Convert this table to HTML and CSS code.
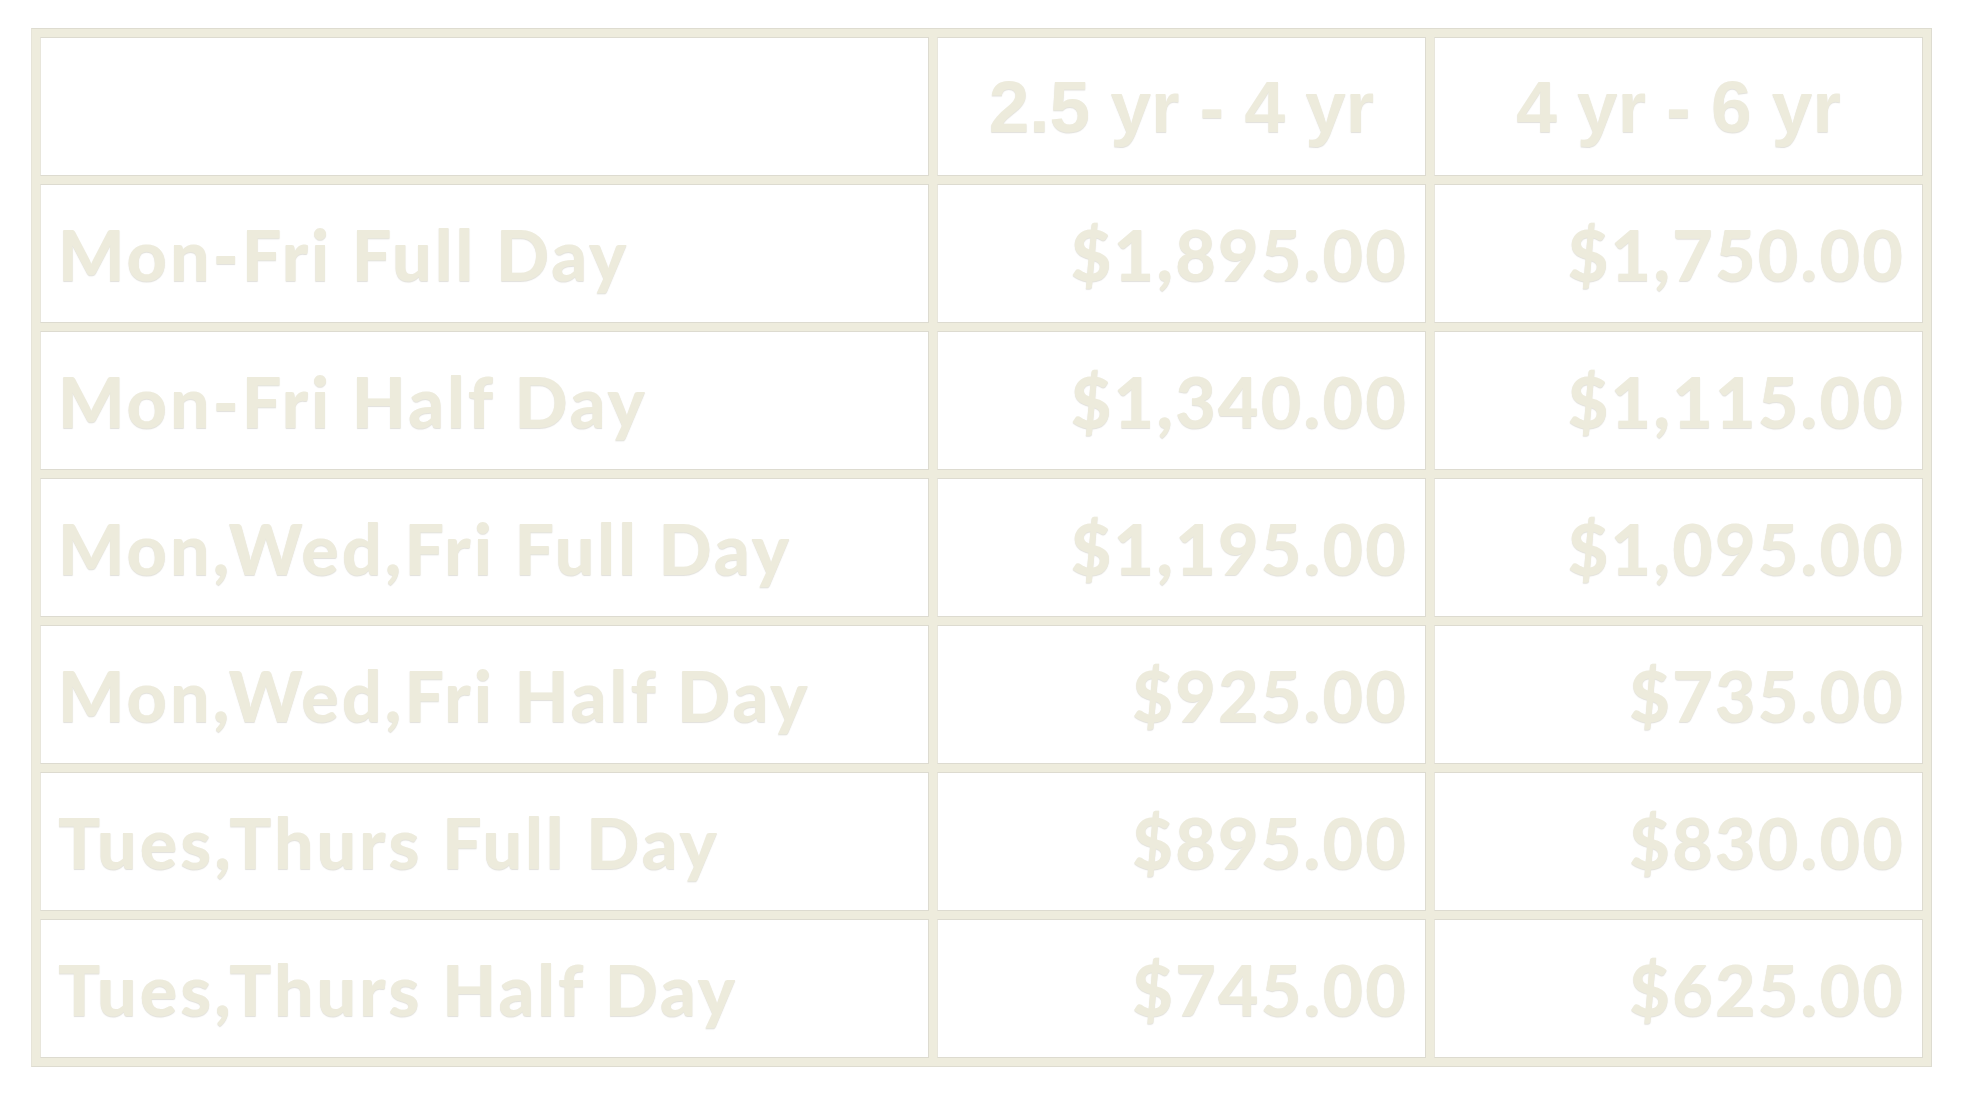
FILE: index.html
```html
<!DOCTYPE html>
<html lang="en">
<head>
<meta charset="utf-8">
<title>Tuition Rates</title>
<link rel="stylesheet" href="styles.css">
</head>
<body>
<div class="wrap">
  <table class="rates">
    <colgroup>
      <col class="c-label">
      <col class="c-price">
      <col class="c-price">
    </colgroup>
    <thead>
      <tr>
        <th class="blank"></th>
        <th class="age">2.5 yr - 4 yr</th>
        <th class="age">4 yr - 6 yr</th>
      </tr>
    </thead>
    <tbody>
      <tr><td class="label">Mon-Fri Full Day</td><td class="price">$1,895.00</td><td class="price">$1,750.00</td></tr>
      <tr><td class="label">Mon-Fri Half Day</td><td class="price">$1,340.00</td><td class="price">$1,115.00</td></tr>
      <tr><td class="label">Mon,Wed,Fri Full Day</td><td class="price">$1,195.00</td><td class="price">$1,095.00</td></tr>
      <tr><td class="label">Mon,Wed,Fri Half Day</td><td class="price">$925.00</td><td class="price">$735.00</td></tr>
      <tr><td class="label">Tues,Thurs Full Day</td><td class="price">$895.00</td><td class="price">$830.00</td></tr>
      <tr><td class="label">Tues,Thurs Half Day</td><td class="price">$745.00</td><td class="price">$625.00</td></tr>
    </tbody>
  </table>
</div>
</body>
</html>
```
FILE: styles.css
```css
html, body {
  margin: 0;
  padding: 0;
  background: #ffffff;
}

.wrap {
  padding: 28px 31px;
}

.rates {
  width: 1901px;
  table-layout: fixed;
  border-collapse: separate;
  border-spacing: 8px;
  background: #eeecdd;
  border: 1px solid #dedcd0;
  border-left-color: #e6e4d8;
}

.c-label { width: 889px; }
.c-price { width: 489px; }

.rates th,
.rates td {
  box-sizing: border-box;
  height: 139px;
  background: #ffffff;
  border: 1px solid #dddbd0;
  border-left-color: #e8e6db;
  vertical-align: middle;
  color: #edebdc;
  text-shadow: 0 1px 1px rgba(120, 115, 90, 0.22);
  white-space: nowrap;
}

.age {
  font-family: "Liberation Sans", Arial, sans-serif;
  font-weight: 700;
  font-size: 73px;
  letter-spacing: 0;
  text-align: center;
  padding: 0;
}

.label {
  font-family: Lato, sans-serif;
  font-weight: 900;
  font-size: 70px;
  letter-spacing: 3px;
  text-align: left;
  padding: 0 0 0 17px;
}

.price {
  font-family: Lato, sans-serif;
  font-weight: 900;
  font-size: 70px;
  letter-spacing: 2.2px;
  text-align: right;
  padding: 0 17px 0 0;
}
```
